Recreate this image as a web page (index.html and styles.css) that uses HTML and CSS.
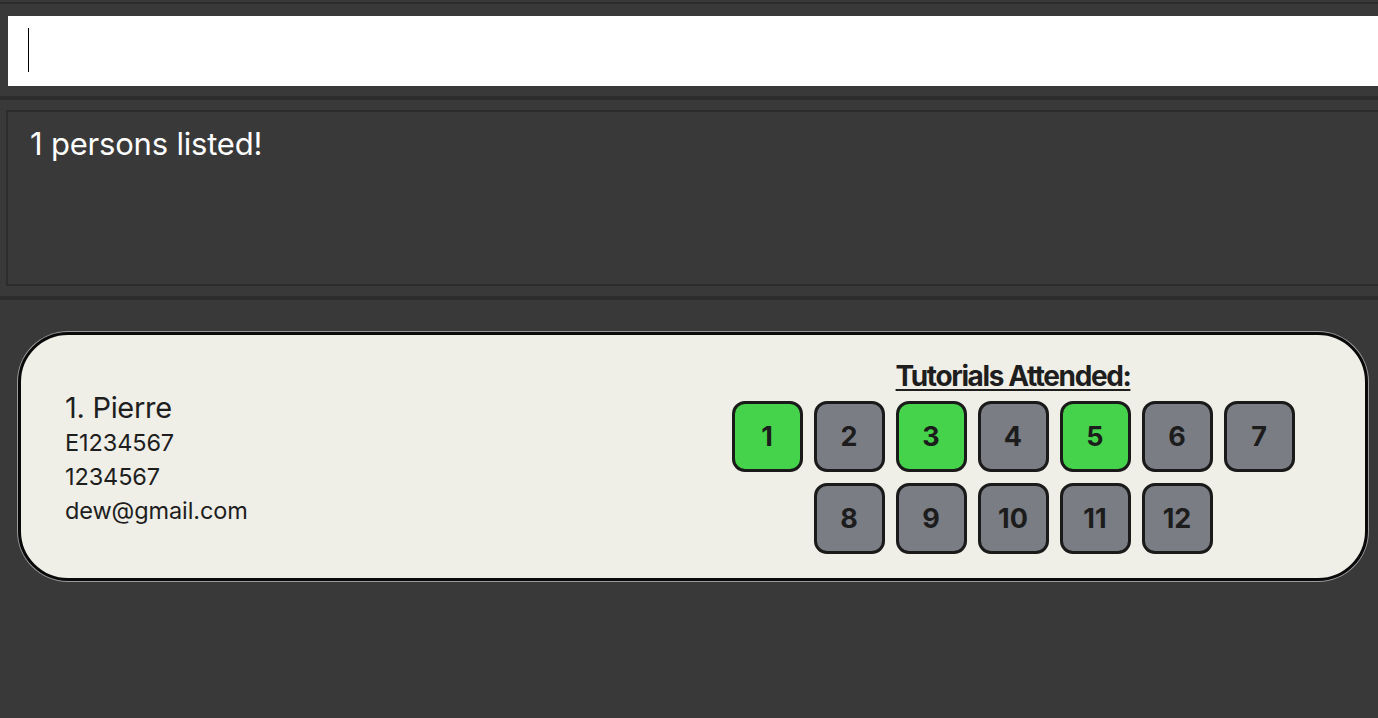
FILE: index.html
```html
<!DOCTYPE html>
<html>
<head>
<meta charset="utf-8">
<link rel="stylesheet" href="styles.css">
</head>
<body>
<div class="sep sep-top"></div>
<div class="command">
  <div class="command-input"><span class="caret"></span></div>
</div>
<div class="sep sep-thick"></div>
<div class="result">
  <div class="result-box">1 persons listed!</div>
</div>
<div class="sep sep-thick"></div>
<div class="list">
  <div class="card">
    <div class="info">
      <div class="name">1. Pierre</div>
      <div class="line">E1234567</div>
      <div class="line">1234567</div>
      <div class="line">dew@gmail.com</div>
    </div>
    <div class="tutorials">
      <div class="tut-title">Tutorials Attended:</div>
      <div class="tut-grid">
        <div class="tut on">1</div>
        <div class="tut">2</div>
        <div class="tut on">3</div>
        <div class="tut">4</div>
        <div class="tut on">5</div>
        <div class="tut">6</div>
        <div class="tut">7</div>
        <div class="tut">8</div>
        <div class="tut">9</div>
        <div class="tut">10</div>
        <div class="tut">11</div>
        <div class="tut">12</div>
      </div>
    </div>
  </div>
</div>
</body>
</html>
```
FILE: styles.css
```css
html, body {
  margin: 0;
  padding: 0;
  background: #393939;
  font-family: Inter, "Noto Sans", sans-serif;
  height: 100%;
  overflow: hidden;
}
body {
  padding-top: 2px;
  box-sizing: border-box;
}
.sep {
  background: #2c2c2c;
}
.sep-top {
  height: 2px;
}
.sep-thick {
  height: 4px;
}
.command {
  padding: 12px 0 10px 8px;
}
.command-input {
  background: #ffffff;
  height: 70px;
  padding: 12px 0 0 20px;
  box-sizing: border-box;
}
.caret {
  display: block;
  width: 1px;
  height: 44px;
  background: #000;
}
.result {
  padding: 10px 0 10px 6px;
}
.result-box {
  height: 176px;
  box-sizing: border-box;
  border: 2px solid #2c2c2c;
  border-right: none;
  color: #ffffff;
  font-size: 31px;
  padding: 13px 0 0 22px;
  letter-spacing: -0.2px;
}
.list {
  padding: 32px 10px 0 18px;
}
.card {
  height: 249px;
  box-sizing: border-box;
  background: #efefe7;
  border: 3px solid #0a0a0a;
  border-radius: 50px;
  box-shadow: 0 0 0 1px #9a9a9a;
  display: flex;
  align-items: center;
  padding: 0 52px 0 44px;
  color: #1e1e1e;
}
.info {
  flex: 1;
  padding-top: 4px;
}
.name {
  font-size: 29px;
  line-height: 36px;
  letter-spacing: -0.3px;
}
.line {
  font-size: 23.5px;
  line-height: 34px;
  letter-spacing: -0.1px;
}
.tutorials {
  width: 600px;
  display: flex;
  flex-direction: column;
  align-items: center;
  padding-top: 1px;
}
.tut-title {
  font-size: 28px;
  font-weight: 700;
  letter-spacing: -1.4px;
  text-decoration: underline;
  text-decoration-thickness: 2px;
  text-underline-offset: 3px;
  line-height: 30px;
  margin-bottom: 10px;
}
.tut-grid {
  width: 563px;
  display: flex;
  flex-wrap: wrap;
  justify-content: center;
  gap: 11px;
}
.tut {
  width: 71px;
  height: 71px;
  box-sizing: border-box;
  border: 3px solid #1a1a1a;
  border-radius: 13px;
  background: #7a7d84;
  display: flex;
  align-items: center;
  justify-content: center;
  font-size: 27px;
  font-weight: 700;
  color: #1c1c1c;
}
.tut.on {
  background: #45d34b;
}
```
